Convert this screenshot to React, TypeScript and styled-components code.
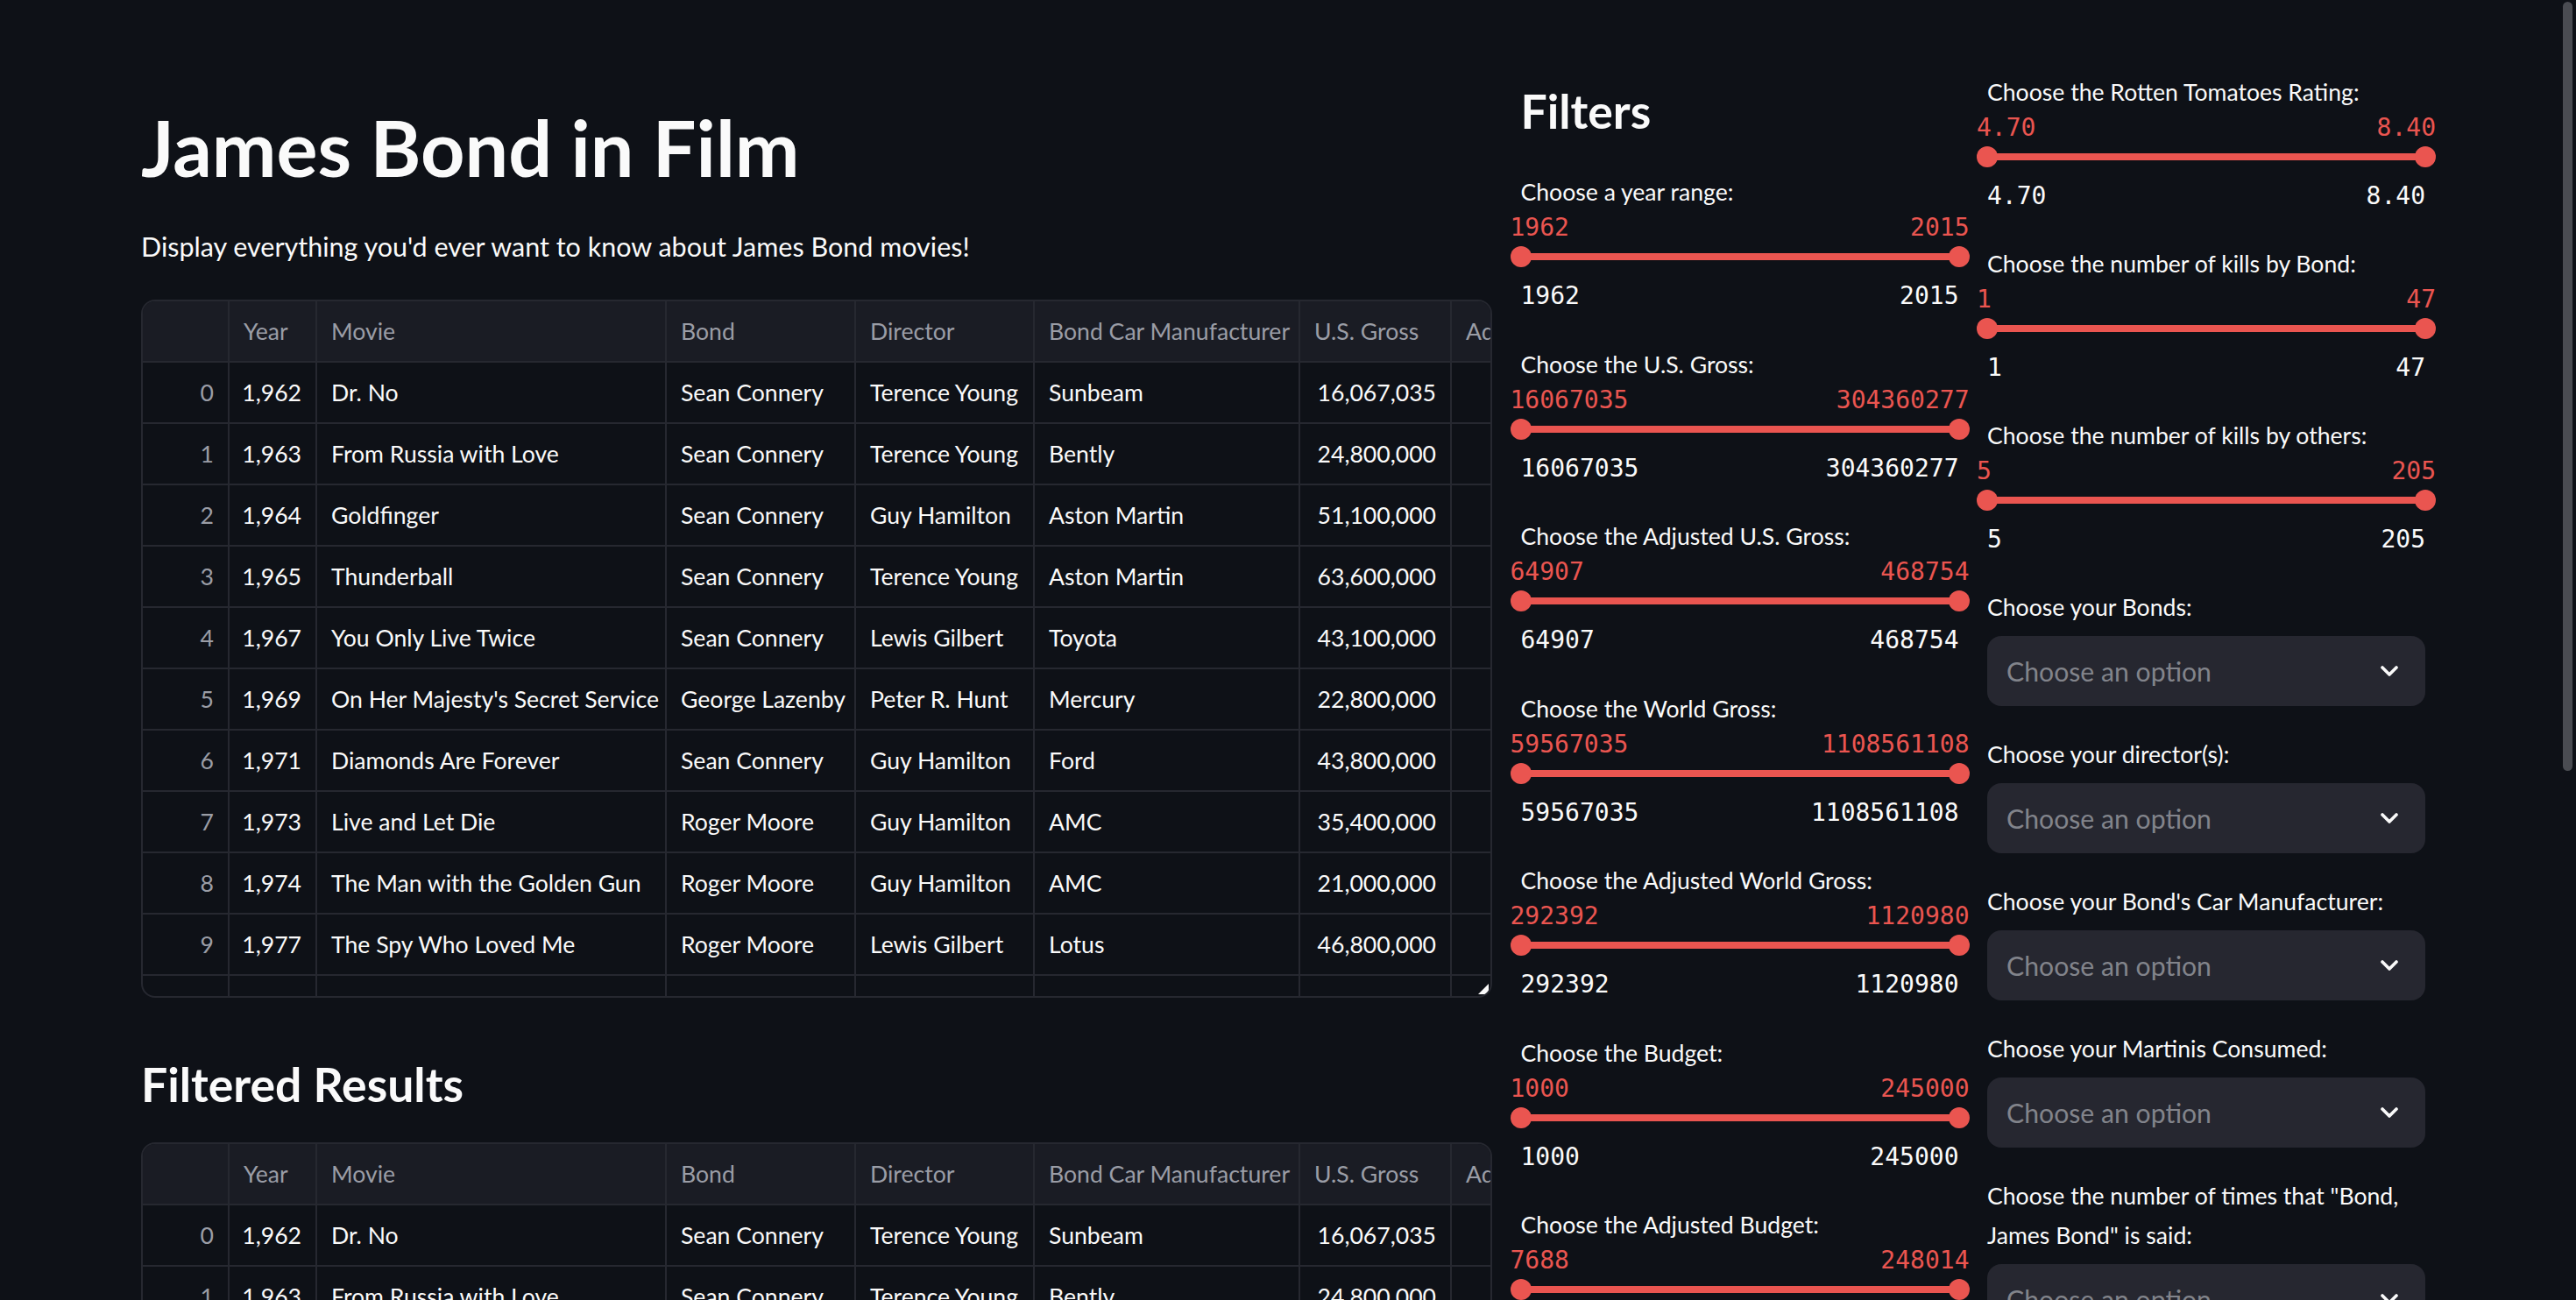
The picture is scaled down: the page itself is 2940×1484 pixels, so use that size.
import React from "react";
import styled, { createGlobalStyle } from "styled-components";

const SANS = `"Lato", "Noto Sans", sans-serif`;
const MONO = `"DejaVu Sans Mono", "Liberation Mono", monospace`;
const RED = "#ea5550";
const LINE = "#262830";

const Global = createGlobalStyle`
  html, body { margin: 0; padding: 0; background: #0e1117; overflow: hidden; }
  body { font-family: ${SANS}; color: #fafafa; }
  * { box-sizing: border-box; }
`;

const Page = styled.div`
  position: relative;
  width: 2940px;
  height: 1484px;
  overflow: hidden;
  padding: 83px 0 0 161px;
  display: grid;
  grid-template-columns: 1542px 500px 500px;
  column-gap: 32.5px;
  align-items: start;
`;

const Column = styled.div<{ $pad?: number }>`
  display: flex;
  flex-direction: column;
  min-width: 0;
  padding-top: ${(p) => p.$pad ?? 0}px;
`;

const Title = styled.h1`
  margin: 33px 0 0;
  font-size: 88px;
  font-weight: 700;
  line-height: 1.2;
`;

const Subtitle = styled.p`
  margin: 34px 0 0;
  font-size: 30.5px;
  line-height: 51px;
`;

const SubHeading = styled.h3<{ $top: number; $bottom: number }>`
  margin: ${(p) => p.$top}px 0 ${(p) => p.$bottom}px;
  font-size: 53.5px;
  font-weight: 700;
  line-height: 67px;
`;

const TableFrame = styled.div<{ $top: number }>`
  position: relative;
  margin-top: ${(p) => p.$top}px;
  height: 797px;
  border: 2px solid ${LINE};
  border-radius: 16px;
  overflow: hidden;
  background: #0e1117;
  flex-shrink: 0;
`;

const Row = styled.div<{ $header?: boolean }>`
  display: grid;
  grid-template-columns: 99px 100px 399px 216px 204px 303px 173px 360px;
  height: 70px;
  width: max-content;
  background: ${(p) => (p.$header ? "#1a1c24" : "transparent")};
`;

const Cell = styled.div<{ $right?: boolean; $muted?: boolean }>`
  display: flex;
  align-items: center;
  justify-content: ${(p) => (p.$right ? "flex-end" : "flex-start")};
  padding: 0 16px;
  border-right: 2px solid ${LINE};
  border-bottom: 2px solid ${LINE};
  font-size: 26.6px;
  white-space: nowrap;
  overflow: hidden;
  color: ${(p) => (p.$muted ? "#9a9da6" : "#fafafa")};
`;

const ResizeHandle = styled.svg`
  position: absolute;
  right: 2px;
  bottom: 2px;
  width: 12px;
  height: 12px;
`;

const Label = styled.div`
  font-size: 26.6px;
  line-height: 45px;
  color: #fafafa;
`;

const SliderBlock = styled.div<{ $h: number }>`
  display: flex;
  flex-direction: column;
  height: ${(p) => p.$h}px;
`;

const ValueRow = styled.div<{ $accent?: boolean }>`
  display: flex;
  justify-content: space-between;
  height: 36px;
  line-height: 36px;
  font-family: ${MONO};
  font-size: 28px;
  color: ${(p) => (p.$accent ? RED : "#fafafa")};
  margin: ${(p) => (p.$accent ? "0 -12px" : "15px 0 0")};
`;

const Track = styled.div`
  display: flex;
  align-items: center;
  height: 24px;
  margin: 3px -12px 0;
`;

const Thumb = styled.span`
  width: 24px;
  height: 24px;
  border-radius: 50%;
  background: ${RED};
  flex-shrink: 0;
`;

const Bar = styled.span`
  flex: 1;
  height: 8px;
  margin: 0 -2px;
  background: ${RED};
`;

const SelectBlock = styled.div`
  display: flex;
  flex-direction: column;
  padding-bottom: 33.5px;
`;

const SelectBox = styled.div`
  margin-top: 9.5px;
  height: 80px;
  border-radius: 16px;
  background: #262730;
  display: flex;
  align-items: center;
  justify-content: space-between;
  padding: 0 31px 0 22px;
  font-size: 30.2px;
  color: #82848b;
`;

const Chevron = styled.svg`
  width: 20px;
  height: 12px;
`;

const ScrollThumb = styled.div`
  position: absolute;
  top: 2px;
  right: 4px;
  width: 11px;
  height: 878px;
  border-radius: 6px;
  background: #4a4c52;
`;

type Movie = [number, string, string, string, string, string, string];

const movies: Movie[] = [
  [0, "1,962", "Dr. No", "Sean Connery", "Terence Young", "Sunbeam", "16,067,035"],
  [1, "1,963", "From Russia with Love", "Sean Connery", "Terence Young", "Bently", "24,800,000"],
  [2, "1,964", "Goldfinger", "Sean Connery", "Guy Hamilton", "Aston Martin", "51,100,000"],
  [3, "1,965", "Thunderball", "Sean Connery", "Terence Young", "Aston Martin", "63,600,000"],
  [4, "1,967", "You Only Live Twice", "Sean Connery", "Lewis Gilbert", "Toyota", "43,100,000"],
  [5, "1,969", "On Her Majesty's Secret Service", "George Lazenby", "Peter R. Hunt", "Mercury", "22,800,000"],
  [6, "1,971", "Diamonds Are Forever", "Sean Connery", "Guy Hamilton", "Ford", "43,800,000"],
  [7, "1,973", "Live and Let Die", "Roger Moore", "Guy Hamilton", "AMC", "35,400,000"],
  [8, "1,974", "The Man with the Golden Gun", "Roger Moore", "Guy Hamilton", "AMC", "21,000,000"],
  [9, "1,977", "The Spy Who Loved Me", "Roger Moore", "Lewis Gilbert", "Lotus", "46,800,000"],
  [10, "1,979", "Moonraker", "Roger Moore", "Lewis Gilbert", "Lotus", "70,300,000"],
];

const headers = ["", "Year", "Movie", "Bond", "Director", "Bond Car Manufacturer", "U.S. Gross", "Adjusted U.S. Gross"];

function DataTable({ top, resize }: { top: number; resize?: boolean }) {
  return (
    <TableFrame $top={top}>
      <Row $header>
        {headers.map((h, i) => (
          <Cell key={i} $muted>
            {h}
          </Cell>
        ))}
      </Row>
      {movies.map((m) => (
        <Row key={m[0]}>
          <Cell $right $muted>
            {m[0]}
          </Cell>
          <Cell $right>{m[1]}</Cell>
          <Cell>{m[2]}</Cell>
          <Cell>{m[3]}</Cell>
          <Cell>{m[4]}</Cell>
          <Cell>{m[5]}</Cell>
          <Cell $right>{m[6]}</Cell>
          <Cell $right />
        </Row>
      ))}
      {resize && (
        <ResizeHandle viewBox="0 0 12 12">
          <path d="M12 0 L12 9 Q12 12 9 12 L0 12 Z" fill="#fafafa" />
        </ResizeHandle>
      )}
    </TableFrame>
  );
}

function RangeSlider({ label, min, max, h = 196 }: { label: string; min: string; max: string; h?: number }) {
  return (
    <SliderBlock $h={h}>
      <Label>{label}</Label>
      <ValueRow $accent>
        <span>{min}</span>
        <span>{max}</span>
      </ValueRow>
      <Track>
        <Thumb />
        <Bar />
        <Thumb />
      </Track>
      <ValueRow>
        <span>{min}</span>
        <span>{max}</span>
      </ValueRow>
    </SliderBlock>
  );
}

function MultiSelect({ label }: { label: React.ReactNode }) {
  return (
    <SelectBlock>
      <Label>{label}</Label>
      <SelectBox>
        <span>Choose an option</span>
        <Chevron viewBox="0 0 20 12">
          <polyline points="2,2 10,10 18,2" fill="none" stroke="#fafafa" strokeWidth="3.6" strokeLinecap="round" strokeLinejoin="round" />
        </Chevron>
      </SelectBox>
    </SelectBlock>
  );
}

const leftSliders = [
  ["Choose a year range:", "1962", "2015"],
  ["Choose the U.S. Gross:", "16067035", "304360277"],
  ["Choose the Adjusted U.S. Gross:", "64907", "468754"],
  ["Choose the World Gross:", "59567035", "1108561108"],
  ["Choose the Adjusted World Gross:", "292392", "1120980"],
  ["Choose the Budget:", "1000", "245000"],
  ["Choose the Adjusted Budget:", "7688", "248014"],
];

const rightSliders = [
  ["Choose the Rotten Tomatoes Rating:", "4.70", "8.40"],
  ["Choose the number of kills by Bond:", "1", "47"],
  ["Choose the number of kills by others:", "5", "205"],
];

const selects = [
  "Choose your Bonds:",
  "Choose your director(s):",
  "Choose your Bond's Car Manufacturer:",
  "Choose your Martinis Consumed:",
  'Choose the number of times that "Bond, James Bond" is said:',
];

export default function App() {
  return (
    <>
      <Global />
      <Page>
        <Column>
          <Title>James Bond in Film</Title>
          <Subtitle>Display everything you'd ever want to know about James Bond movies!</Subtitle>
          <DataTable top={35} resize />
          <SubHeading $top={65} $bottom={0}>Filtered Results</SubHeading>
          <DataTable top={33} />
        </Column>
        <Column $pad={2}>
          <SubHeading $top={8} $bottom={37}>Filters</SubHeading>
          {leftSliders.map(([l, a, b]) => (
            <RangeSlider key={l} label={l} min={a} max={b} h={196.5} />
          ))}
        </Column>
        <Column>
          {rightSliders.map(([l, a, b]) => (
            <RangeSlider key={l} label={l} min={a} max={b} />
          ))}
          {selects.map((s) => (
            <MultiSelect key={s} label={s} />
          ))}
        </Column>
        <ScrollThumb />
      </Page>
    </>
  );
}
